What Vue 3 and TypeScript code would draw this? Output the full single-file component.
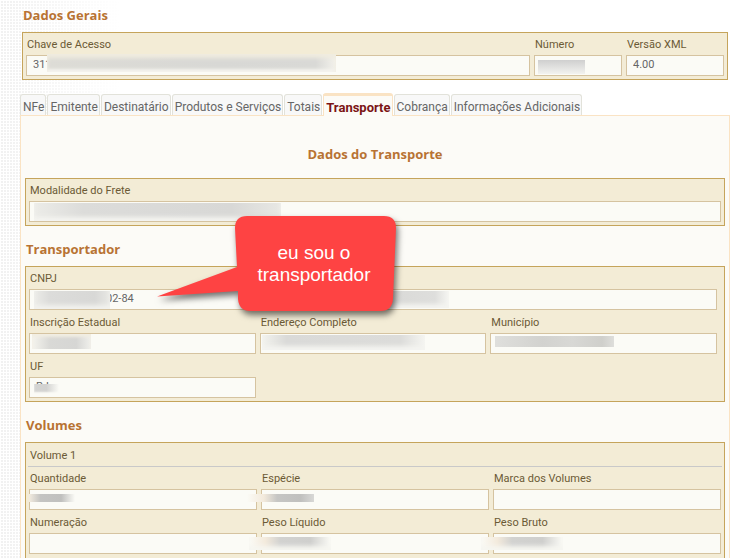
<script setup lang="ts">
import { ref } from 'vue'

interface Field {
  id: string
  label: string
  value: string
  mask?: string
}

const tabs: string[] = [
  'NFe',
  'Emitente',
  'Destinatário',
  'Produtos e Serviços',
  'Totais',
  'Transporte',
  'Cobrança',
  'Informações Adicionais',
]
const active = ref<string>('Transporte')

const geral: Field[] = [
  { id: 'chave', label: 'Chave de Acesso', value: '311', mask: 'm-chave' },
  { id: 'numero', label: 'Número', value: '', mask: 'm-numero' },
  { id: 'versao', label: 'Versão XML', value: '4.00' },
]

const transportador: Field[] = [
  { id: 'ie', label: 'Inscrição Estadual', value: '', mask: 'm-ie' },
  { id: 'endereco', label: 'Endereço Completo', value: '', mask: 'm-endereco' },
  { id: 'municipio', label: 'Município', value: '', mask: 'm-municipio' },
  { id: 'uf', label: 'UF', value: 'RJ', mask: 'm-uf' },
]

const volume: Field[] = [
  { id: 'quantidade', label: 'Quantidade', value: '', mask: 'm-quantidade' },
  { id: 'especie', label: 'Espécie', value: '', mask: 'm-especie' },
  { id: 'marca', label: 'Marca dos Volumes', value: '' },
  { id: 'numeracao', label: 'Numeração', value: '' },
  { id: 'liquido', label: 'Peso Líquido', value: '', mask: 'm-peso' },
  { id: 'bruto', label: 'Peso Bruto', value: '', mask: 'm-peso' },
]
</script>

<template>
  <main class="page">
    <h2 class="title">Dados Gerais</h2>
    <section class="panel geral">
      <div v-for="f in geral" :key="f.id" class="field">
        <label :for="f.id">{{ f.label }}</label>
        <input :id="f.id" type="text" readonly :value="f.value" />
        <span v-if="f.mask" class="mask" :class="f.mask"></span>
      </div>
    </section>

    <nav class="tabs" role="tablist">
      <button
        v-for="t in tabs"
        :key="t"
        type="button"
        role="tab"
        class="tab"
        :class="{ active: t === active }"
        :aria-selected="t === active"
        @click="active = t"
      >{{ t }}</button>
    </nav>

    <section class="content">
      <h2 class="title centered">Dados do Transporte</h2>
      <div class="panel">
        <div class="field">
          <label for="frete">Modalidade do Frete</label>
          <input id="frete" type="text" readonly value="" />
          <span class="mask m-frete"></span>
        </div>
      </div>

      <h2 class="title section">Transportador</h2>
      <div class="panel inset">
        <div class="field wide">
          <label for="cnpj">CNPJ</label>
          <input id="cnpj" class="value-end" type="text" readonly value="02-84" />
          <span class="mask m-cnpj"></span>
          <span class="mask m-nome"></span>
        </div>
        <div v-for="f in transportador" :key="f.id" class="field">
          <label :for="f.id">{{ f.label }}</label>
          <input :id="f.id" type="text" readonly :value="f.value" />
          <span v-if="f.mask" class="mask" :class="f.mask"></span>
        </div>
      </div>

      <h2 class="title section">Volumes</h2>
      <div class="panel thirds">
        <h3 class="legend">Volume 1</h3>
        <div v-for="f in volume" :key="f.id" class="field">
          <label :for="f.id">{{ f.label }}</label>
          <input :id="f.id" type="text" readonly :value="f.value" />
          <span v-if="f.mask" class="mask" :class="f.mask"></span>
        </div>
      </div>
    </section>

    <aside class="callout">
      <svg width="250" height="112" viewBox="0 0 250 112" aria-hidden="true">
        <path
          d="M96 4 H233 Q245 4 245 16 L242 87 Q241 99 230 99 H99 Q88 99 87 87 L87 79 L6 84.500 L86 55 L84 16 Q84 4 96 4 Z"
          fill="#fe4343"
        />
      </svg>
      <p>eu sou o<br />transportador</p>
    </aside>
  </main>
</template>

<style>
body {
  margin: 0;
  background: #fff;
}
</style>

<style scoped>
.page {
  position: relative;
  box-sizing: border-box;
  height: 100vh;
  overflow: hidden;
  padding: 0 3px 0 20px;
  font-family: Roboto, 'Open Sans', sans-serif;
  font-size: 11px;
  color: #6b5a35;
  background-image:
    linear-gradient(to right, rgba(255, 255, 255, 0) 0, #fff 120px),
    repeating-linear-gradient(to bottom, #fff 0 1px, transparent 1px 3px),
    repeating-linear-gradient(to right, #fff 0 1px, #f1f1f1 1px 3px);
}

.title {
  margin: 0;
  padding: 5px 3px 7px;
  font-family: 'Open Sans', sans-serif;
  font-size: 13px;
  line-height: 20px;
  font-weight: 700;
  color: #b87333;
}

.centered {
  padding: 28px 0 14px;
  text-align: center;
}

.section {
  padding: 13px 1px 7px;
}

.panel {
  display: grid;
  gap: 1px 4px;
  padding: 0 3px 3px;
  border: 1px solid #c5a45b;
  background: #f3ecd6;
}

.geral {
  margin: 0 2px;
  grid-template-columns: 504fr 88fr 98fr;
}

.inset {
  grid-template-columns: repeat(3, 1fr);
  padding-right: 7px;
}

.thirds {
  grid-template-columns: repeat(3, 1fr);
  padding-bottom: 12px;
}

.wide {
  grid-column: 1 / -1;
}

.legend {
  grid-column: 1 / -1;
  margin: 0 -1px -1px;
  padding: 2px 2px 0;
  border-bottom: 1px solid #c9c9c9;
  font-size: 11px;
  font-weight: 400;
  line-height: 21px;
}

.field {
  position: relative;
  display: flex;
  flex-direction: column;
  min-width: 0;
}

.field label {
  padding: 2px 0 0 1px;
  line-height: 20px;
  white-space: nowrap;
}

.field input {
  box-sizing: border-box;
  width: 100%;
  height: 21px;
  margin: 0;
  padding: 0 6px 2px;
  border: 1px solid #d5c3a0;
  border-radius: 0;
  outline: none;
  background: #fbfbf6;
  font: inherit;
  color: #666;
}

.field .value-end {
  padding-left: 76px;
}

.tabs {
  display: flex;
  align-items: flex-end;
  gap: 1px;
  height: 22px;
  margin-top: 13px;
}

.tab {
  box-sizing: border-box;
  height: 21px;
  padding: 3px 1px 0 2px;
  border: 1px solid #e2e2da;
  border-bottom: 0;
  border-radius: 3px 3px 0 0;
  background: #f8f8f8;
  font-family: Roboto, 'Noto Sans', sans-serif;
  font-size: 12px;
  line-height: 18px;
  color: #666;
  white-space: nowrap;
}

.tab.active {
  position: relative;
  height: 23px;
  margin-bottom: -1px;
  border-color: #fae3c4;
  border-top-width: 3px;
  background: #fcfbf7;
  font-size: 13px;
  font-weight: 700;
  color: #7b1414;
}

.content {
  padding: 0 4px 40px;
  border: 1px solid #fae3c4;
  background: #fcfbf7;
}

/* Smudges that hide private values */
.mask {
  position: absolute;
  top: 24px;
  left: 5px;
  height: 15px;
  background: linear-gradient(to right, #ecece8, #dcdcda 20%, #d8d8d6 80%, #e8e8e4);
}

.m-chave { top: 21px; left: 21px; width: 289px; height: 18px; background: linear-gradient(to right, #dddcd6, #d8d8d5 60%, #d9d9d6 93%, #f3f2ec); box-shadow: inset 0 4px 4px #f0ecdf, inset 0 -3px 3px #f4f3ee; }
.m-numero { top: 27px; left: 4px; width: 47px; height: 14px; background: linear-gradient(to bottom, #cfcfcf, #f2f2ef); }
.m-frete { width: 247px; height: 18px; box-shadow: inset 0 -4px 4px #f4f4f0; }
.m-cnpj { width: 76px; height: 18px; box-shadow: inset 0 -4px 4px #f2f2ee; }
.m-nome { left: 350px; width: 70px; height: 17px; background: linear-gradient(to right, #d8d8d6, #dededc 80%, #f6f6f2); box-shadow: inset 0 -4px 4px #f4f4f0; }
.m-ie { top: 23px; left: 3px; width: 59px; background: linear-gradient(to right, #f5f4ee, #d9d9d6 30%, #d6d6d4 75%, #f0f0ec); box-shadow: inset 0 3px 3px #f2eee2; }
.m-endereco { left: 2px; width: 163px; background: linear-gradient(to right, #f3f3ee, #dadad8 15%, #dcdcda 85%, #f5f5f1); box-shadow: inset 0 -4px 4px #f4f4f0; }
.m-municipio { top: 25px; width: 119px; height: 11px; background: linear-gradient(to right, #dfdfdc, #d2d2cf 40%, #d8d8d5 65%, #cfcfcb 90%, #dededb); }
.m-uf { top: 29px; width: 25px; height: 12px; background: linear-gradient(to right, #d4d4d2, #d2d2d0 50%, #fbfbf6); box-shadow: inset 0 -4px 2px #fbfbf6; }
.m-quantidade { top: 27px; left: 0; width: 46px; height: 8px; background: linear-gradient(to right, #f3ecdf, #c4c4c2 25%, #c0c0be 70%, #fbfbf6); }
.m-especie { top: 27px; left: -14px; width: 67px; height: 8px; background: linear-gradient(to right, #fbfbf6, #f3eadc 25%, #c6c6c4 45%, #c0c0be 80%, #d8d8d6); }
.m-peso { top: 26px; left: -12px; width: 82px; height: 13px; background: linear-gradient(to right, #fbfbf6, #f3eadc 20%, #d2d2d0 38%, #cfcfcd 75%, #fbfbf6); box-shadow: inset 0 -4px 4px #f6f6f1; }

/* Speech balloon laid over the form */
.callout {
  position: absolute;
  top: 212px;
  left: 151px;
  width: 250px;
}

.callout svg {
  display: block;
  filter: drop-shadow(2px 4px 3px rgba(0, 0, 0, 0.55));
}

.callout p {
  position: absolute;
  top: 30px;
  left: 83px;
  width: 160px;
  margin: 0;
  font-family: 'Liberation Sans', Arial, sans-serif;
  font-size: 19px;
  line-height: 22px;
  text-align: center;
  color: #fff;
}
</style>
